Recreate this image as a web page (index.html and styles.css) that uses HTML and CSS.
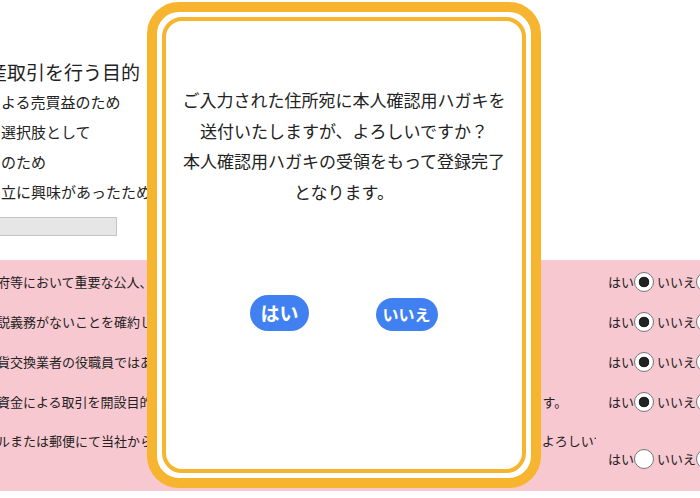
FILE: index.html
```html
<!DOCTYPE html>
<html lang="ja">
<head>
<meta charset="utf-8">
<title>本人確認</title>
<link rel="stylesheet" href="styles.css">
</head>
<body>
<div class="page">
  <section class="purpose">
    <h2 class="purpose-title">資産取引を行う目的</h2>
    <ul class="purpose-list">
      <li>よる売買益のため</li>
      <li>選択肢として</li>
      <li>のため</li>
      <li>立に興味があったため</li>
    </ul>
    <div class="other-input"></div>
  </section>

  <section class="confirm">
    <div class="row">
      <div class="row-text">府等において重要な公人、またはその家族ではないことを確約します。</div>
      <div class="choices"><span class="lbl">はい</span><input type="radio" class="radio" name="q1" checked><span class="lbl lbl-no">いいえ</span><input type="radio" class="radio" name="q1"></div>
    </div>
    <div class="row">
      <div class="row-text">説義務がないことを確約します。</div>
      <div class="choices"><span class="lbl">はい</span><input type="radio" class="radio" name="q2" checked><span class="lbl lbl-no">いいえ</span><input type="radio" class="radio" name="q2"></div>
    </div>
    <div class="row">
      <div class="row-text">貨交換業者の役職員ではありません。</div>
      <div class="choices"><span class="lbl">はい</span><input type="radio" class="radio" name="q3" checked><span class="lbl lbl-no">いいえ</span><input type="radio" class="radio" name="q3"></div>
    </div>
    <div class="row">
      <div class="row-text">資金による取引を開設目的以外の第三者の利益のために行うものでは一切ないことを確約します。</div>
      <div class="choices"><span class="lbl">はい</span><input type="radio" class="radio" name="q4" checked><span class="lbl lbl-no">いいえ</span><input type="radio" class="radio" name="q4"></div>
    </div>
    <div class="row row-tall">
      <div class="row-text">ルまたは郵便にて当社からのお知らせやキャンペーン情報をご案内する場合がございますが、よろしいですか。</div>
      <div class="choices"><span class="lbl">はい</span><input type="radio" class="radio" name="q5"><span class="lbl lbl-no">いいえ</span><input type="radio" class="radio" name="q5"></div>
    </div>
  </section>
</div>

<div class="modal" role="dialog" aria-modal="true">
  <div class="modal-inner">
    <p class="modal-text">ご入力された住所宛に本人確認用ハガキを<br>送付いたしますが、よろしいですか？<br>本人確認用ハガキの受領をもって登録完了<br>となります。</p>
    <div class="modal-buttons">
      <button type="button" class="btn btn-yes">はい</button>
      <button type="button" class="btn btn-no">いいえ</button>
    </div>
  </div>
</div>
</body>
</html>
```

FILE: styles.css
```css
html, body {
  margin: 0;
  padding: 0;
}
body {
  width: 700px;
  height: 498px;
  overflow: hidden;
  background: #ffffff;
  color: #222222;
  font-family: "Noto Sans CJK JP", "Noto Sans", sans-serif;
}
.page {
  width: 740px;
}
.purpose {
  padding-top: 57px;
}
.purpose-title {
  margin: 0 0 0 -31px;
  font-size: 19px;
  font-weight: 400;
  line-height: 30px;
  white-space: nowrap;
}
.purpose-list {
  list-style: none;
  margin: 0;
  padding: 0 0 0 1px;
  font-size: 15px;
  line-height: 30px;
}
.other-input {
  margin: 10px 0 0 -3px;
  width: 118px;
  height: 17px;
  background: #e6e6e6;
  border: 1px solid #c4c4c4;
}
.confirm {
  margin: 24px 0 0 -3px;
  padding-top: 2px;
  background: #f8c8d0;
}
.row {
  display: grid;
  grid-template-columns: 599px auto;
  column-gap: 12px;
  align-items: center;
  height: 40px;
  font-size: 13px;
}
.row-text {
  white-space: nowrap;
  overflow: hidden;
  line-height: 40px;
}
.row-tall {
  height: 69px;
  align-items: start;
}
.row-tall .row-text {
  padding-top: 9px;
  line-height: 20px;
}
.row-tall .choices {
  margin-top: 27px;
}
.choices {
  display: flex;
  align-items: center;
  white-space: nowrap;
}
.lbl {
  font-size: 13px;
  line-height: 20px;
}
.lbl-no {
  margin-left: 3px;
}
.radio {
  appearance: none;
  -webkit-appearance: none;
  margin: 0;
  width: 20px;
  height: 20px;
  border: 1px solid #767676;
  border-radius: 50%;
  background: #ffffff;
  flex: none;
}
.radio:checked {
  background: radial-gradient(circle, #222222 0 5px, #ffffff 5.6px);
}

.modal {
  position: fixed;
  left: 147px;
  top: 2px;
  width: 394px;
  height: 486px;
  box-sizing: border-box;
  border: 10px solid #f7b52f;
  border-radius: 32px;
  padding: 5px;
  background: #ffffff;
}
.modal-inner {
  box-sizing: border-box;
  height: 100%;
  border: 4px solid #f7b52f;
  border-radius: 20px;
  padding-top: 64px;
  text-align: center;
}
.modal-text {
  margin: 0;
  font-size: 17px;
  line-height: 30.5px;
  color: #222222;
}
.modal-buttons {
  display: flex;
  justify-content: center;
  align-items: flex-end;
  gap: 67px;
  margin-top: 88px;
}
.btn {
  border: none;
  margin: 0;
  background: #4080f0;
  color: #ffffff;
  font-family: "Noto Sans CJK JP", "Noto Sans", sans-serif;
  font-weight: 700;
}
.btn-yes {
  height: 36px;
  padding: 0 10px;
  border-radius: 18px;
  font-size: 19px;
  line-height: 36px;
}
.btn-no {
  height: 33px;
  padding: 0 7px;
  border-radius: 17px;
  font-size: 16px;
  line-height: 33px;
}
```
